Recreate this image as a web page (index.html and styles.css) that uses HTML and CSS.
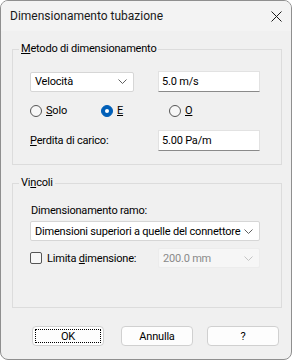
FILE: index.html
```html
<!DOCTYPE html>
<html lang="it">
<head>
<meta charset="utf-8">
<title>Dimensionamento tubazione</title>
<link rel="stylesheet" href="styles.css">
</head>
<body>
<div class="window">
  <div class="titlebar">
    <span class="title">Dimensionamento tubazione</span>
    <svg class="close" width="11" height="11" viewBox="0 0 11 11"><path d="M0.5 0.5 L10.5 10.5 M10.5 0.5 L0.5 10.5" stroke="#1b1b1b" stroke-width="1" fill="none"/></svg>
  </div>
  <div class="body">
    <fieldset class="group g1">
      <legend><u>M</u>etodo di dimensionamento</legend>
      <div class="row r1">
        <div class="combo c-small"><span class="ctext">Velocità</span><svg class="chev" width="9" height="5" viewBox="0 0 9 5"><path d="M0.5 0.5 L4.5 4.5 L8.5 0.5" stroke="#5f5f5f" fill="none"/></svg></div>
        <div class="edit">5.0 m/s</div>
      </div>
      <div class="radios">
        <label class="opt"><span class="radio"></span><span><u>S</u>olo</span></label>
        <label class="opt"><span class="radio on"></span><span><u>E</u></span></label>
        <label class="opt"><span class="radio"></span><span><u>O</u></span></label>
      </div>
      <div class="row r3">
        <span class="lbl"><u>P</u>erdita di carico:</span>
        <div class="edit">5.00 Pa/m</div>
      </div>
    </fieldset>
    <fieldset class="group g2">
      <legend>Vi<u>n</u>coli</legend>
      <div class="lbl ramo">Dimensionamento ramo:</div>
      <div class="combo c-wide"><span class="ctext">Dimensioni superiori a quelle del connettore</span><svg class="chev" width="9" height="5" viewBox="0 0 9 5"><path d="M0.5 0.5 L4.5 4.5 L8.5 0.5" stroke="#5f5f5f" fill="none"/></svg></div>
      <div class="row r5">
        <label class="opt chk"><span class="box"></span><span>Limita <u>d</u>imensione:</span></label>
        <div class="combo c-dis"><span class="ctext">200.0 mm</span><svg class="chev" width="9" height="5" viewBox="0 0 9 5"><path d="M0.5 0.5 L4.5 4.5 L8.5 0.5" stroke="#c4c4c4" fill="none"/></svg></div>
      </div>
    </fieldset>
    <div class="buttons">
      <button class="btn ok"><span class="focus">OK</span></button>
      <button class="btn annulla">Annulla</button>
      <button class="btn help">?</button>
    </div>
  </div>
</div>
</body>
</html>
```
FILE: styles.css
```css
html, body { margin: 0; padding: 0; background: #ffffff; }
body { font-family: Roboto, "Liberation Sans", sans-serif; font-size: 11px; color: #000; letter-spacing: -0.2px; }

.window {
  width: 292px; height: 360px; box-sizing: border-box;
  border: 1px solid #8f8f8f; border-radius: 8px;
  background: #f0f0f0; overflow: hidden;
  display: flex; flex-direction: column;
}
.titlebar {
  height: 30px; flex: none; background: #f3f3f3;
  display: flex; align-items: center; justify-content: space-between;
  padding: 0 9px 0 9px;
}
.title { font-size: 12px; color: #1a1a1a; letter-spacing: 0; }
.close { margin-top: 1px; }

.body { padding: 10px 9px 0 11px; display: flex; flex-direction: column; }

.group {
  margin: 0; padding: 0; border: 1px solid #dcdcdc; min-width: 0;
  display: flex; flex-direction: column; align-items: flex-start;
}
.group legend { margin-left: -11px; padding: 0 2px; line-height: 16px; }
.g1 { padding: 14px 0 13px 17px; }
.g2 { margin-top: 10px; padding: 12px 0 39px 17px; }

.row { display: flex; align-items: center; }
.r1 { height: 21px; gap: 24px; }
.r3 { margin-top: 13px; height: 21px; width: 230px; justify-content: space-between; }

.combo {
  box-sizing: border-box; height: 20px; background: #fff;
  border: 1px solid #d6d6d6; border-radius: 2px;
  display: flex; align-items: center; justify-content: space-between;
  padding: 0 6px 0 4px;
}
.ctext { white-space: nowrap; }
.c-small { width: 104px; }
.c-wide { width: 230px; margin-top: 2px; }
.c-dis { width: 102px; background: #f6f6f6; border-color: #ececec; color: #8a8a8a; }
.chev { flex: none; }

.edit {
  box-sizing: border-box; width: 102px; height: 21px; background: #fff;
  border: 1px solid #e2e2e2; border-bottom-color: #8a8a8a;
  padding: 0 3px; line-height: 18px; display: flex; align-items: center;
}

.radios { display: grid; grid-template-columns: 71px 68px auto; margin-top: 12px; height: 13px; align-items: center; }
.opt { display: flex; align-items: center; gap: 4px; }
.radio {
  width: 12px; height: 12px; border-radius: 50%; box-sizing: border-box;
  border: 1px solid #555; background: #f7f7f7; position: relative;
}
.radio.on { background: #005fb8; border-color: #005fb8; }
.radio.on::after {
  content: ""; position: absolute; left: 3px; top: 3px; width: 4px; height: 4px;
  border-radius: 50%; background: #fff;
}

.lbl { line-height: 16px; }
.ramo { padding-left: 1px; }

.r5 { margin-top: 7px; height: 20px; width: 230px; justify-content: space-between; }
.box { width: 12px; height: 12px; box-sizing: border-box; border: 1px solid #555; border-radius: 2px; background: #f7f7f7; }
.chk { gap: 5px; }

.buttons { display: flex; margin-top: 18px; padding-left: 20px; }
.btn {
  box-sizing: border-box; width: 72px; height: 20px; margin: 0; padding: 0;
  background: #fdfdfd; border: 1px solid #d0d0d0; border-radius: 4px;
  font-family: inherit; font-size: 11px; letter-spacing: -0.2px; color: #000;
  display: flex; align-items: center; justify-content: center;
}
.ok { padding: 2px; width: 72px; }
.focus { flex: 1; align-self: stretch; border: 1px dotted #000; display: flex; align-items: center; justify-content: center; }
.annulla { margin-left: 17px; }
.help { margin-left: 14px; }
```
